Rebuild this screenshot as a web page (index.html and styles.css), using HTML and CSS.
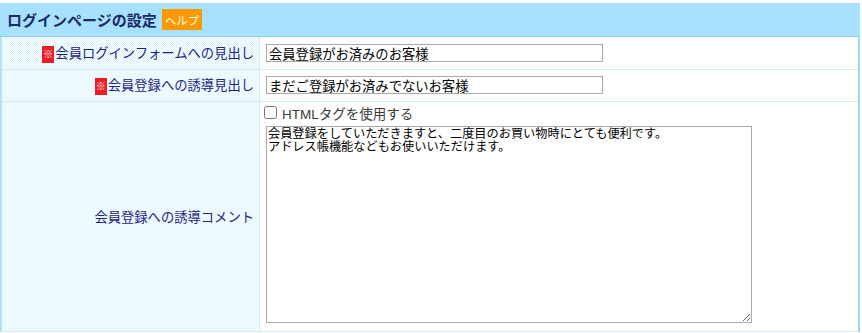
FILE: index.html
```html
<!DOCTYPE html>
<html lang="ja">
<head>
    <meta charset="UTF-8">
    <title>ログインページの設定</title>
    <link rel="stylesheet" href="styles.css">
</head>
<body>

<div class="panel">
    <h2 class="panel-head">ログインページの設定<span class="help">ヘルプ</span></h2>
    <table class="form-table">
        <tr class="row-short">
            <th><span class="req">※</span>会員ログインフォームへの見出し</th>
            <td><input type="text" class="text-input" value="会員登録がお済みのお客様"></td>
        </tr>
        <tr class="row-short">
            <th><span class="req">※</span>会員登録への誘導見出し</th>
            <td><input type="text" class="text-input" value="まだご登録がお済みでないお客様"></td>
        </tr>
        <tr class="row-tall">
            <th>会員登録への誘導コメント</th>
            <td>
                <label class="check"><input type="checkbox"> HTMLタグを使用する</label>
                <textarea class="comment">会員登録をしていただきますと、二度目のお買い物時にとても便利です。
アドレス帳機能などもお使いいただけます。</textarea>
            </td>
        </tr>
    </table>
</div>

</body>
</html>
```
FILE: styles.css
```css
body {
    margin: 0;
    padding-top: 3px;
    font-family: "Liberation Sans", Arial, "Noto Sans CJK JP", sans-serif;
}
.panel {
    width: 860px;
}
.panel-head {
    box-sizing: border-box;
    margin: 0;
    height: 34px;
    display: flex;
    align-items: center;
    padding-left: 7px;
    background-color: #a8e1fd;
    border-bottom: 1px solid #8fd2ee;
    font-size: 15px;
    font-weight: bold;
    color: #1b2a6b;
}
.help {
    margin-left: 5px;
    padding: 3px 3px 2px;
    background-color: #ff9900;
    color: #fff;
    font-size: 11.5px;
    font-weight: normal;
}
.form-table {
    width: 860px;
    border-collapse: collapse;
    border-left: 2px solid #b4e2f5;
    border-right: 2px solid #a3d8ee;
}
.form-table th,
.form-table td {
    border-bottom: 1px solid #d2ebf5;
    padding: 0;
}
.form-table th {
    width: 252px;
    padding-right: 5px;
    text-align: right;
    font-weight: normal;
    font-size: 13.3px;
    color: #1d2384;
    border-right: 1px solid #d2ebf5;
    background-color: #fff;
    background-image: repeating-conic-gradient(#d8f2fe 0 25%, #fff 0 50%);
    background-size: 2px 2px;
}
.form-table td {
    padding-left: 6px;
}
.row-short {
    height: 32px;
}
.req {
    display: inline-block;
    width: 12px;
    height: 17px;
    line-height: 17px;
    margin-right: 1px;
    text-align: center;
    vertical-align: middle;
    background-color: #ee1c25;
    color: #fff;
    font-size: 10px;
}
.text-input {
    box-sizing: border-box;
    width: 337px;
    height: 18px;
    margin: 0;
    padding: 0 2px;
    border: 1px solid #a9a9a9;
    font-family: "Noto Sans CJK JP", sans-serif;
    font-size: 13.3px;
    color: #000;
    vertical-align: middle;
}
.row-tall td {
    padding-top: 2px;
    padding-bottom: 8px;
    vertical-align: top;
}
.check {
    display: flex;
    align-items: center;
    gap: 5px;
    height: 18px;
    margin-left: -2px;
    font-size: 13.5px;
    color: #3a3a3a;
}
.check input {
    margin: 0;
    width: 13px;
    height: 13px;
}
.comment {
    display: block;
    box-sizing: border-box;
    width: 486px;
    height: 197px;
    margin-top: 4px;
    padding: 0 1px;
    border: 1px solid #a9a9a9;
    font-family: "Noto Sans CJK JP", sans-serif;
    font-size: 12.2px;
    line-height: 13px;
    color: #000;
    resize: both;
}
```
